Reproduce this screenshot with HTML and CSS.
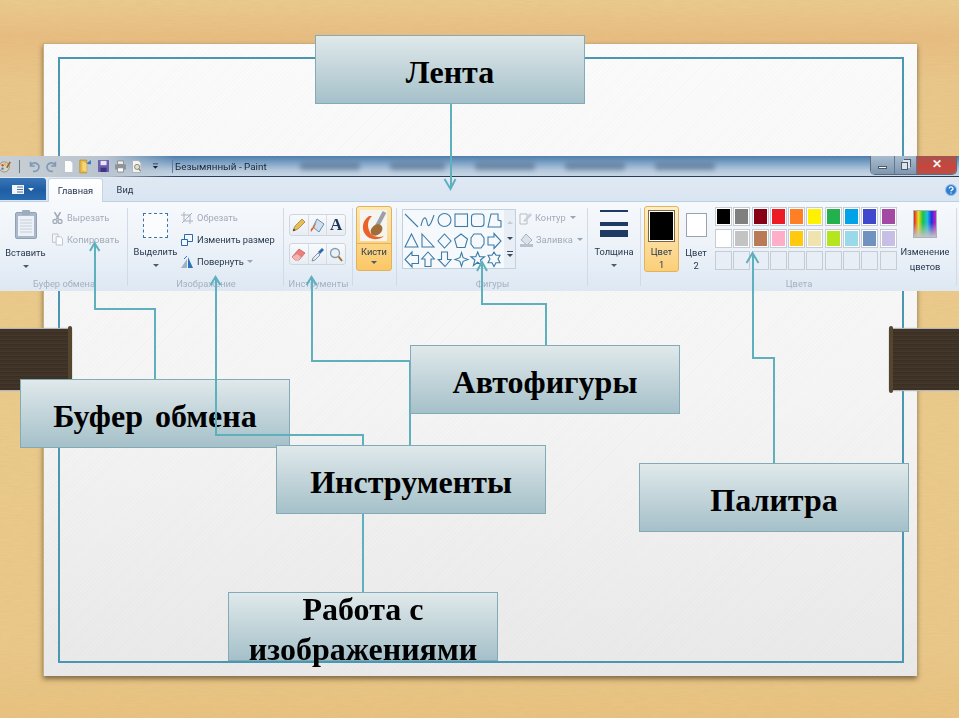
FILE: index.html

```html
<!DOCTYPE html>
<html lang="ru">
<head>
  <meta charset="UTF-8" />
  <title>Лента Paint</title>
  <link rel="stylesheet" href="styles.css">
</head>
<body>
<div class="slide">
  <svg class="wood" width="959" height="718">
    <filter id="grain"><feTurbulence type="fractalNoise" baseFrequency="0.08 0.9" numOctaves="3" seed="4"/><feColorMatrix values="0 0 0 0 0.62  0 0 0 0 0.42  0 0 0 0 0.16  0 0 0 0.7 -0.2"/></filter>
    <rect width="959" height="718" filter="url(#grain)"/>
  </svg>
  <div class="paper"></div>
  <div class="frame"></div>
  <div class="belt belt-left"></div>
  <div class="belt belt-right"></div>

  <!-- окно Paint -->
  <div class="window">
    <div class="titlebar">
      <div class="qat">
        <svg class="q-paint" width="13" height="15" viewBox="0 0 13 15"><circle cx="5" cy="8" r="6" fill="#d9d4c4" stroke="#8b8b80"/><circle cx="3" cy="6" r="1.4" fill="#d8503a"/><circle cx="6" cy="5" r="1.4" fill="#e5b73b"/><circle cx="3" cy="10" r="1.4" fill="#3f83c4"/><path d="M8 9 12 2" stroke="#9a6a2a" stroke-width="2"/></svg>
        <i class="q-sep"></i>
        <svg width="14" height="14" viewBox="0 0 14 14"><path d="M3 2v5h5M3 7a5 5 0 1 1 3 6" fill="none" stroke="#7f99b8" stroke-width="2"/></svg>
        <svg width="14" height="14" viewBox="0 0 14 14"><path d="M11 2v5H6M11 7a5 5 0 1 0-3 6" fill="none" stroke="#7f99b8" stroke-width="2"/></svg>
        <svg width="11" height="15" viewBox="0 0 11 15"><path d="M.5.5h7l3 3v11H.5z" fill="#fdfdfd" stroke="#b5bdc8"/></svg>
        <svg width="15" height="17" viewBox="0 0 15 17"><path d="M1 1h8v15H1z" fill="#e9bd4c" stroke="#b98d2b"/><path d="M9 5l5-4v5h-3z" fill="#2f78c4"/><path d="M4 3l5 2v10l-5-2z" fill="#f4d777"/></svg>
        <svg width="13" height="14" viewBox="0 0 13 14"><path d="M0 0h13v14H0z" fill="#6d5fb0"/><path d="M3 1h7v5H3z" fill="#e8e6f4"/><path d="M3 9h7v5H3z" fill="#3d3380"/></svg>
        <svg width="13" height="13" viewBox="0 0 13 13"><path d="M3 0h7v4H3z" fill="#f4f4f4" stroke="#888"/><path d="M0 4h13v6H0z" fill="#8d939b"/><path d="M3 8h7v5H3z" fill="#fff" stroke="#888"/></svg>
        <svg width="11" height="15" viewBox="0 0 11 15"><path d="M.5.5h7l3 3v11H.5z" fill="#f5f5f0" stroke="#aab"/><circle cx="6" cy="8" r="3" fill="#cfe2f2" stroke="#8c7a4a"/><path d="M8 10l2 3" stroke="#8c7a4a" stroke-width="1.4"/></svg>
        <svg class="q-more" width="8" height="7" viewBox="0 0 8 7"><path d="M1 0h6v1H1zM1 3h6L4 6z" fill="#1d2430"/></svg>
        <i class="q-sep"></i>
      </div>
      <span class="win-title">Безымянный - Paint</span>
      <div class="ghosts">
        <i class="ghost g1"></i><i class="ghost g2"></i><i class="ghost g3"></i><i class="ghost g4"></i><i class="ghost g5"></i>
      </div>
      <div class="controls">
        <div class="ctl ctl-min"><i></i></div>
        <div class="ctl ctl-max"><i></i></div>
        <div class="ctl ctl-close">✕</div>
      </div>
    </div>

    <div class="tabs">
      <div class="file-btn">
        <svg width="12" height="9" viewBox="0 0 12 9"><path d="M0 0h12v9H0z" fill="#f2f5f9"/><path d="M5 2h6M5 4.500h6M5 7h6" stroke="#5a7596"/></svg>
        <i class="caret caret-white"></i>
      </div>
      <div class="tab tab-active">Главная</div>
      <div class="tab">Вид</div>
      <svg class="help" width="12" height="12" viewBox="0 0 12 12"><circle cx="6" cy="6" r="5.500" fill="#2f7fd0" stroke="#9cc2e6"/><path d="M4.200 4.500a1.900 1.700 0 1 1 2.600 1.600c-.6.300-.8.600-.8 1.200M6 8.400v1.200" fill="none" stroke="#fff" stroke-width="1.300"/></svg>
    </div>

    <div class="ribbon">
      <section class="group g-clip">
        <div class="group-body">
          <div class="big big-paste">
            <svg class="big-icon" width="22" height="29" viewBox="0 0 22 29"><rect x=".5" y="2.500" width="21" height="26" rx="1.500" fill="#a9b9cb" stroke="#8fa1b5"/><rect x="3" y="6" width="16" height="20" fill="#eef2f6"/><path d="M5 10h12M5 13h12M5 16h12M5 19h12M5 22h12" stroke="#c3ceda"/><rect x="7" y="0" width="8" height="5" rx="1" fill="#9badbf"/></svg>
            <span>Вставить</span>
            <i class="caret"></i>
          </div>
          <div class="small-col">
            <div class="small off">
              <svg width="10" height="12" viewBox="0 0 10 12"><path d="M2 0l4 7M8 0L4 7" stroke="#a3acb8" stroke-width="1.600"/><circle cx="2.500" cy="9.500" r="2" fill="none" stroke="#a3acb8" stroke-width="1.300"/><circle cx="7.500" cy="9.500" r="2" fill="none" stroke="#a3acb8" stroke-width="1.300"/></svg>
              <span>Вырезать</span>
            </div>
            <div class="small off">
              <svg width="12" height="13" viewBox="0 0 12 13"><path d="M.5.500h6v9h-6z" fill="#f4f6f8" stroke="#b8bfc8"/><path d="M4.500 3.500h5l2 2v7h-7z" fill="#fbfcfd" stroke="#b8bfc8"/></svg>
              <span>Копировать</span>
            </div>
          </div>
        </div>
        <div class="group-label">Буфер обмена</div>
      </section>

      <section class="group g-image">
        <div class="group-body">
          <div class="big big-select">
            <span class="dashed"></span>
            <span>Выделить</span>
            <i class="caret"></i>
          </div>
          <div class="small-col">
            <div class="small off">
              <svg width="12" height="12" viewBox="0 0 12 12"><path d="M3 0v9h9M0 3h9v9M1 11 11 1" fill="none" stroke="#a9b3bf"/></svg>
              <span>Обрезать</span>
            </div>
            <div class="small">
              <svg width="12" height="12" viewBox="0 0 12 12"><path d="M3.500.500h8v7h-8z" fill="#f4f8fc" stroke="#2a6aa8"/><path d="M.500 5.500h6v6h-6z" fill="#f4f8fc" stroke="#2a6aa8"/></svg>
              <span>Изменить размер</span>
            </div>
            <div class="small">
              <svg width="12" height="12" viewBox="0 0 12 12"><path d="M0 12 6 3v9z" fill="#9fb1c4"/><path d="M7 12V1l5 11z" fill="#2f72b5"/><path d="M3 3 6 0" stroke="#2f72b5"/></svg>
              <span>Повернуть</span>
              <i class="caret caret-inline"></i>
            </div>
          </div>
        </div>
        <div class="group-label">Изображение</div>
      </section>

      <section class="group g-tools">
        <div class="group-body tool-grid">
          <div class="tool-row">
            <div class="tool"><svg width="14" height="14" viewBox="0 0 14 14"><path d="M1 13l2-5 7-7 3 3-7 7z" fill="#e8bd55" stroke="#9a7a30" stroke-width=".7"/><path d="M1 13l.8-2.600 1.800 1.800z" fill="#333"/></svg></div>
            <div class="tool"><svg width="15" height="15" viewBox="0 0 15 15"><path d="M7 1l7 5-5 8-6-5z" fill="#cfe0f0" stroke="#6c8db0"/><path d="M7 3.500 3 9c-2 1-3 3-2 5 1-1 2-3 3-4z" fill="#e0662c"/></svg></div>
            <div class="tool tool-text">A</div>
          </div>
          <div class="tool-row">
            <div class="tool"><svg width="15" height="13" viewBox="0 0 15 13"><path d="M1 9l7-8 6 4-6 7H4z" fill="#ec7f7c" stroke="#b75a58" stroke-width=".7"/><path d="M1 9l3 3h4l2-3-4-3z" fill="#f3b4b2"/></svg></div>
            <div class="tool"><svg width="14" height="15" viewBox="0 0 14 15"><path d="M1 14l1-3 5-5 2 2-5 5z" fill="#e4edf5" stroke="#6b7f94" stroke-width=".8"/><path d="M7 5l3-3 1-1 2 2-1 1-3 3z" fill="#2a6bb0"/></svg></div>
            <div class="tool"><svg width="14" height="15" viewBox="0 0 14 15"><circle cx="6" cy="6" r="4.500" fill="#e8f1f8" stroke="#8a9bab" stroke-width="1.300"/><path d="M9.500 9.500 13 14" stroke="#9a6f38" stroke-width="2"/></svg></div>
          </div>
        </div>
        <div class="group-label">Инструменты</div>
      </section>

      <section class="group g-brush">
        <div class="group-body">
          <div class="brush-btn">
            <div class="brush-top">
              <svg width="27" height="31" viewBox="0 0 27 31"><rect width="27" height="31" fill="#f5f4f0"/><path d="M24.500 2 17 16" stroke="#9aa0a6" stroke-width="4"/><path d="M9 6C3 10 1 18 5 24c4 6 13 7 19 2-6 2-13 1-15-6-2-5-1-10 3-14z" fill="#e8622a"/><ellipse cx="16.500" cy="20" rx="6.500" ry="5" transform="rotate(-40 16.500 20)" fill="#a06c38"/></svg>
            </div>
            <div class="brush-bottom">
              <span>Кисти</span>
              <i class="caret"></i>
            </div>
          </div>
        </div>
      </section>

      <section class="group g-shapes">
        <div class="group-body">
          <div class="gallery">
            <svg class="gallery-shapes" width="101" height="59" viewBox="0 0 101 59" fill="none" stroke="#3d7ba8" stroke-width="1.100">
              <path d="M2 4 15 17"/>
              <path d="M18 16c2-10 5-10 6-4s3 5 7-7"/>
              <circle cx="41.500" cy="10" r="6.500"/>
              <rect x="52" y="4" width="12.500" height="12.500"/>
              <rect x="68.500" y="4" width="12.500" height="12.500" rx="3"/>
              <path d="M85 17l3-13h7v6l3 1v6z"/>
              <path d="M8.500 24 15 37H2z"/>
              <path d="M19 24 31 37H19z"/>
              <path d="M41.500 24l6.500 7-6.500 7-6.500-7z"/>
              <path d="M58 24l6.500 5-2.500 8.500h-8L51.500 29z"/>
              <path d="M71 24h7l3 4v6l-3 4h-7l-3-4v-6z"/>
              <path d="M85 27h6v-3.500l7 7.500-7 7.500V35h-6z"/>
              <path d="M15.500 45.500H9V42l-7 7.500L9 57v-3.500h6.500z"/>
              <path d="M25 42l6.300 7H28v7.500h-6V49h-3.300z"/>
              <path d="M38.500 42h6v7.500H48l-6 7-6.700-7h3.200z"/>
              <path d="M58.500 42.500l1.600 5.200 4.900 1.800-4.900 1.800-1.600 5.200-1.600-5.200-4.900-1.800 4.900-1.800z"/>
              <path d="M74.700 42l1.900 4.800h4.900l-4 3.200 1.500 5.500-4.300-3.200-4.300 3.200 1.500-5.500-4-3.200h4.900z"/>
              <path d="M91 42l2 3.200h4l-2 3.800 2 3.800h-4l-2 3.700-2-3.700h-4l2-3.800-2-3.800h4z"/>
            </svg>
            <div class="gallery-scroll">
              <i class="tri tri-up"></i>
              <i class="tri tri-down"></i>
              <i class="tri tri-more"></i>
            </div>
          </div>
          <div class="small-col shape-opts">
            <div class="small off">
              <svg width="14" height="14" viewBox="0 0 14 14"><path d="M1 3h7v10H1z" fill="#f6f8fa" stroke="#b4bcc6"/><path d="M4 10l7-8 2 2-7 7z" fill="#c8d0d9"/></svg>
              <span>Контур</span><i class="caret caret-inline"></i>
            </div>
            <div class="small off">
              <svg width="15" height="14" viewBox="0 0 15 14"><path d="M7 1l6 6-5 5-6-5z" fill="#dbe3ea" stroke="#a9b3bf"/><path d="M1 11h13v3H1z" fill="#b8c2cc"/></svg>
              <span>Заливка</span><i class="caret caret-inline"></i>
            </div>
          </div>
        </div>
        <div class="group-label">Фигуры</div>
      </section>

      <section class="group g-size">
        <div class="group-body">
          <div class="big big-size">
            <div class="thick">
              <i class="t1"></i><i class="t2"></i><i class="t3"></i>
            </div>
            <span>Толщина</span>
            <i class="caret"></i>
          </div>
        </div>
      </section>

      <section class="group g-colors">
        <div class="group-body">
          <div class="color-btn color-active">
            <i class="well well-black"></i>
            <span>Цвет<br>1</span>
          </div>
          <div class="color-btn">
            <i class="well well-white"></i>
            <span>Цвет<br>2</span>
          </div>
          <div class="palette">
            <i class="c-black"></i><i class="c-gray"></i><i class="c-maroon"></i><i class="c-red"></i><i class="c-orange"></i><i class="c-yellow"></i><i class="c-green"></i><i class="c-sky"></i><i class="c-indigo"></i><i class="c-purple"></i>
            <i class="c-white"></i><i class="c-silver"></i><i class="c-brown"></i><i class="c-pink"></i><i class="c-gold"></i><i class="c-cream"></i><i class="c-lime"></i><i class="c-aqua"></i><i class="c-steel"></i><i class="c-lilac"></i>
            <i></i><i></i><i></i><i></i><i></i><i></i><i></i><i></i><i></i><i></i>
          </div>
          <div class="edit-colors">
            <i class="spectrum"></i>
            <span>Изменение<br>цветов</span>
          </div>
        </div>
        <div class="group-label">Цвета</div>
      </section>
    </div>
  </div>

  <div class="box box-clip">Буфер обмена</div>

  <svg class="links" width="959" height="718" fill="none" stroke="#5fb0bd" stroke-width="2">
    <path d="M451 103V188M444.500 179 450.500 189 455.500 179"/>
    <path d="M155 379V309H95V244M90 251 94.500 243 99.500 251"/>
    <path d="M363 592V435H216V278M210.500 285 215.500 277 220.500 285"/>
    <path d="M410 445V361H312V278M306.500 285 311.500 277 316.500 285"/>
    <path d="M546 345V304H482V263M477 271 482 262 487 271"/>
    <path d="M774 463V358H753V254M746.500 263 752.500 253 758.500 263"/>
  </svg>

  <div class="box box-ribbon">Лента</div>
  <div class="box box-shapes">Автофигуры</div>
  <div class="box box-tools">Инструменты</div>
  <div class="box box-palette">Палитра</div>
  <div class="box box-image">Работа с изображениями</div>
</div>
</body>
</html>
```

FILE: styles.css

```css
* { box-sizing: border-box; }
html, body { margin: 0; padding: 0; background: #fff; }
i { display: block; }

.slide { position: relative; width: 959px; height: 718px; overflow: hidden; background: linear-gradient(180deg, #eacb8e 0, #e8bd82 5%, #e9c78a 12%, #ebcb8c 50%, #e9c88a 90%, #e8c280 100%); }
.wood { position: absolute; left: 0; top: 0; opacity: .35; }
.paper { position: absolute; left: 43px; top: 43px; width: 874px; height: 633px; border-top: 1px solid #c9ad7a; border-left: 1px solid #c9ad7a; box-shadow: 0 3px 5px rgba(70, 55, 35, .65); background: repeating-linear-gradient(135deg, rgba(0, 0, 0, .012) 0 1px, transparent 1px 3px), linear-gradient(180deg, #fbfbfc 0, #f5f5f5 55%, #e9e9e9 100%); }
.frame { position: absolute; left: 58px; top: 57px; width: 846px; height: 606px; border: 2px solid #4a97b4; }

.belt { position: absolute; top: 329px; height: 61px; background: repeating-linear-gradient(180deg, #3f3327 0 2px, #453828 2px 3px, #3a2f24 3px 4px); box-shadow: 0 -1px 1px #b5b5b8, 0 1px 1px #b5b5b8; }
.belt::after { content: ""; position: absolute; top: -3px; bottom: -3px; width: 4px; border-radius: 2px; background: #54452f; }
.belt-left { left: 0; width: 72px; }
.belt-left::after { right: 0; }
.belt-right { left: 889px; width: 70px; }
.belt-right::after { left: 0; }

/* подписи */
.box { position: absolute; width: 270px; height: 69px; padding-top: 5px; display: flex; align-items: center; justify-content: center; text-align: center; border: 1px solid #83abb7; background: linear-gradient(180deg, #e0e9eb 0, #a5c0c9 100%); color: #000; font: bold 32px/40px "Liberation Serif", serif; }
.box-ribbon { left: 315px; top: 35px; }
.box-clip { left: 20px; top: 379px; word-spacing: 4px; }
.box-shapes { left: 410px; top: 345px; }
.box-tools { left: 276px; top: 445px; }
.box-palette { left: 639px; top: 463px; }
.box-image { left: 228px; top: 592px; padding-top: 4px; }
.links { position: absolute; left: 0; top: 0; }

/* окно */
.window { position: absolute; left: 0; top: 156px; width: 959px; height: 136px; font: 9.300px/13px Roboto, sans-serif; color: #27384d; filter: blur(.35px); }
.titlebar { height: 21px; display: flex; align-items: center; border-bottom: 1px solid #2a3a52; background: linear-gradient(180deg, #4f7daa 0, #7ea3c7 35%, #b3c7db 70%, #c7d6e5 100%); }
.qat { width: 175px; height: 21px; flex: none; display: flex; align-items: center; gap: 6px; background: linear-gradient(90deg, #c9cfd3 0, #b9c4cf 60%, rgba(185, 196, 207, 0) 100%); }
.q-sep { width: 1px; height: 13px; margin: 0 2px; background: #667a90; }
.q-more { margin: 0 5px; }
.win-title { width: 100px; flex: none; font-size: 9.850px; color: #1c2533; white-space: nowrap; }
.ghosts { flex: 1; height: 21px; display: flex; align-items: center; gap: 30px; padding-left: 25px; }
.ghost { height: 8px; border-radius: 3px; background: #5b7591; filter: blur(2.5px); opacity: .7; }
.g1, .g3, .g4, .g5 { width: 60px; }
.g2 { width: 55px; }
.controls { width: 87px; height: 19px; margin: -2px 2px 0 0; flex: none; display: flex; border: 1px solid #5d6c7c; border-top: 0; border-radius: 0 0 5px 5px; overflow: hidden; }
.ctl { display: flex; align-items: center; justify-content: center; background: linear-gradient(180deg, #a9bccf, #7e97b0); border-right: 1px solid #64778c; }
.ctl-min { width: 24px; }
.ctl-min i { width: 9px; height: 3px; margin-top: 5px; background: #f3f6f9; border: 1px solid #4c5a69; }
.ctl-max { width: 22px; }
.ctl-max i { width: 7px; height: 8px; margin: 3px 2px 0 0; background: #dde5ec; border: 1px solid #4c5a69; box-shadow: 2px -2px 0 0 #dde5ec, 3px -3px 0 0 #4c5a69; }
.ctl-close { flex: 1; border: 0; color: #f3f3f3; font-weight: bold; font-size: 12px; background: linear-gradient(180deg, #a7534e, #c8453a 60%, #b8504c); }

.tabs { height: 25px; display: flex; align-items: flex-end; background: linear-gradient(180deg, #dfe9f4, #d9e5f1); border-bottom: 1px solid #bcd0e3; }
.file-btn { width: 46px; height: 22px; margin-bottom: 1px; flex: none; display: flex; align-items: center; justify-content: center; gap: 4px; background: linear-gradient(180deg, #3a76b8 0, #1f5ea4 55%, #2a6cb0 100%); border-radius: 0 3px 0 0; }
.tab { width: 44px; height: 22px; flex: none; text-align: center; line-height: 21px; color: #27384d; }
.tab-active { width: 55px; height: 24px; margin: 0 0 -1px 2px; line-height: 23px; background: linear-gradient(180deg, #fff, #f6f9fc); border: 1px solid #c4d4e4; border-bottom: 0; border-radius: 3px 3px 0 0; }
.help { margin: 0 2px 5px auto; }

.ribbon { height: 89px; display: flex; background: linear-gradient(180deg, #f6f9fc 0, #eef3f9 45%, #dde8f3 100%); }
.group { position: relative; flex: none; display: flex; flex-direction: column; }
.group::after { content: ""; position: absolute; right: 0; top: 6px; bottom: 5px; width: 1px; background: #d0dbe7; }
.group-body { flex: 1; display: flex; min-height: 0; }
.group-label { height: 14px; text-align: center; line-height: 13px; color: #a4b0c0; }
.g-clip { width: 128px; }
.g-image { width: 156px; }
.g-tools { width: 69px; }
.g-brush { width: 44px; }
.g-shapes { width: 191px; }
.g-size { width: 53px; }
.g-colors { width: 316px; }

.caret { width: 0; height: 0; border: 3px solid transparent; border-top: 3px solid #4c5a6b; border-bottom: 0; }
.caret-white { border-top-color: #fff; }
.caret-inline { margin-left: -1px; border-top-color: #9aa6b4; }

.big { display: flex; flex-direction: column; align-items: center; white-space: nowrap; }
.big span { line-height: 13px; }
.big .caret { margin-top: 6px; }
.big-paste { width: 51px; padding-top: 8px; }
.big-icon { margin-bottom: 7px; }
.big-select { width: 53px; margin-left: 1px; padding-top: 11px; }
.dashed { width: 25px; height: 25px; margin-bottom: 7px; border: 1px dashed #3b74ad; background: #fbfcfe; }
.big-size { width: 52px; padding-top: 8px; }
.thick { width: 28px; height: 28px; margin-bottom: 7px; display: flex; flex-direction: column; gap: 4px; }
.thick i { background: #1f3a63; }
.t1 { height: 2px; }
.t2 { height: 4px; margin-top: 6px; }
.t3 { height: 7px; }

.small-col { display: flex; flex-direction: column; gap: 9px; padding-top: 9px; }
.small { height: 13px; display: flex; align-items: center; gap: 4px; white-space: nowrap; }
.small svg { flex: none; }
.off { color: #a2abb8; }
.g-clip .small svg { width: 11px; margin-left: 1px; }
.g-image .small-col { margin-left: -1px; }

.tool-grid { flex-direction: column; gap: 7px; padding: 12px 0 0 5px; }
.tool-row { width: 57px; height: 22px; display: flex; border: 1px solid #cfd6de; border-radius: 3px; background: linear-gradient(180deg, #f8fafc, #e8edf3); }
.tool { flex: 1; display: flex; align-items: center; justify-content: center; border-right: 1px solid #d7dde4; }
.tool:last-child { border-right: 0; }
.tool-text { font: bold 17px/20px "Liberation Serif", serif; color: #1d3658; }

.brush-btn { width: 36px; height: 65px; margin: 4px 0 0 3px; display: flex; flex-direction: column; border: 1px solid #e0b25a; border-radius: 3px; background: linear-gradient(180deg, #fde9b5, #fbc765); }
.brush-top { height: 37px; padding: 3px 0 0 3px; border-bottom: 1px solid #e0b25a; }
.brush-bottom { flex: 1; display: flex; flex-direction: column; align-items: center; }
.brush-bottom span { line-height: 13px; margin-top: 1px; }
.brush-bottom .caret { margin-top: 3px; }

.gallery { width: 114px; height: 60px; margin: 7px 0 0 5px; display: flex; border: 1px solid #c3d0de; background: #f6f9fc; }
.gallery-shapes { flex: none; }
.gallery-scroll { flex: 1; display: flex; flex-direction: column; align-items: center; justify-content: space-around; background: #e7eef6; padding: 4px 0; }
.tri { width: 0; height: 0; border: 3px solid transparent; }
.tri-up { border-bottom: 3px solid #c4ccd6; border-top: 0; }
.tri-down { border-top: 3px solid #3c4a5c; border-bottom: 0; }
.tri-more { border-top: 3px solid #3c4a5c; border-bottom: 0; position: relative; }
.tri-more::before { content: ""; position: absolute; left: -3px; top: -6px; width: 6px; height: 1px; background: #3c4a5c; }
.shape-opts { margin-left: 3px; }
.shape-opts .small { gap: 2px; }
.shape-opts .caret-inline { margin-left: 2px; }

.color-btn { width: 35px; height: 66px; margin-top: 4px; display: flex; flex-direction: column; align-items: center; text-align: center; }
.color-btn span { line-height: 13px; margin-top: 7px; }
.color-active { margin-left: 3px; border: 1px solid #e3b35c; border-radius: 3px; padding-top: 3px; background: linear-gradient(180deg, #fdeec8, #fbcf78); }
.well { border: 1px solid #9aa2ad; outline: 1px solid #fff; outline-offset: -2px; }
.well-black { width: 27px; height: 33px; background: #000; border-color: #7a6640; }
.well-white { width: 21px; height: 24px; margin-top: 7px; background: #fff; }
.color-active span { margin-top: 3px; }
.color-btn:not(.color-active) { width: 28px; margin-left: 3px; }
.color-btn:not(.color-active) span { margin-top: 9px; }

.palette { width: 183px; height: 65px; margin: 5px 0 0 5px; flex: none; display: grid; grid-template-columns: repeat(10, 17px); grid-template-rows: repeat(3, 19px); column-gap: 1.300px; row-gap: 3px; }
.palette i { border: 1px solid #c6ccd4; outline: 1px solid #fff; outline-offset: -2px; }
.palette i:nth-child(n+21) { outline: 0; background: #e8eef5; }
.c-black { background: #000; }
.c-gray { background: #7f7f7f; }
.c-maroon { background: #880015; }
.c-red { background: #ed1c24; }
.c-orange { background: #ff7f27; }
.c-yellow { background: #fff200; }
.c-green { background: #22b14c; }
.c-sky { background: #00a2e8; }
.c-indigo { background: #3f48cc; }
.c-purple { background: #a349a4; }
.c-white { background: #fff; }
.c-silver { background: #c3c3c3; }
.c-brown { background: #b97a57; }
.c-pink { background: #ffaec9; }
.c-gold { background: #ffc90e; }
.c-cream { background: #efe4b0; }
.c-lime { background: #b5e61d; }
.c-aqua { background: #99d9ea; }
.c-steel { background: #7092be; }
.c-lilac { background: #c8bfe7; }

.edit-colors { width: 52px; margin-left: 1px; padding-top: 8px; display: flex; flex-direction: column; align-items: center; text-align: center; }
.edit-colors span { line-height: 15px; margin-top: 6px; }
.spectrum { width: 24px; height: 28px; border: 1px solid #aab2bc; background: linear-gradient(180deg, transparent 45%, #c4c4c4 100%), linear-gradient(90deg, #e02020, #e8e020, #20c040, #20c0e0, #2030e0, #d020c0); }
```
